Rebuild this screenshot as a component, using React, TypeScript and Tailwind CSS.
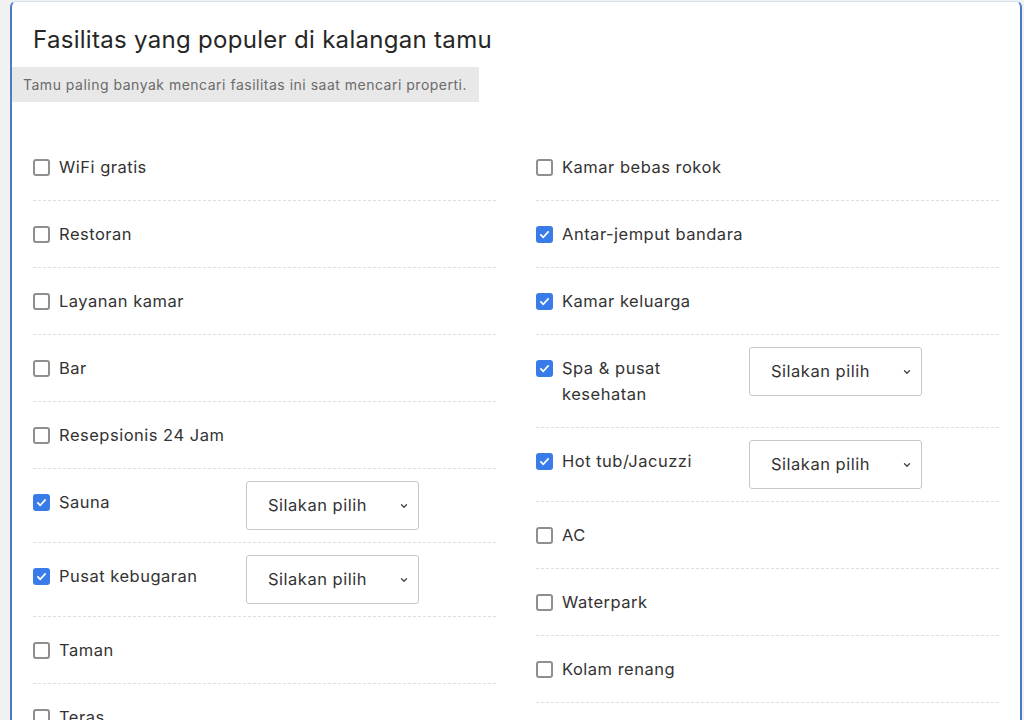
import React from "react";

type Item = { label: string; checked?: boolean; select?: boolean };

const leftItems: Item[] = [
  { label: "WiFi gratis" },
  { label: "Restoran" },
  { label: "Layanan kamar" },
  { label: "Bar" },
  { label: "Resepsionis 24 Jam" },
  { label: "Sauna", checked: true, select: true },
  { label: "Pusat kebugaran", checked: true, select: true },
  { label: "Taman" },
  { label: "Teras" },
];

const rightItems: Item[] = [
  { label: "Kamar bebas rokok" },
  { label: "Antar-jemput bandara", checked: true },
  { label: "Kamar keluarga", checked: true },
  { label: "Spa & pusat kesehatan", checked: true, select: true },
  { label: "Hot tub/Jacuzzi", checked: true, select: true },
  { label: "AC" },
  { label: "Waterpark" },
  { label: "Kolam renang" },
];

function Checkbox({ checked }: { checked?: boolean }) {
  if (checked) {
    return (
      <span className="mt-[5px] flex h-[17px] w-[17px] shrink-0 items-center justify-center rounded-[3px] bg-[#3a7bea]">
        <svg viewBox="0 0 16 16" className="h-[13px] w-[13px]" fill="none">
          <path d="M3.5 8.4l3 3 6-6.6" stroke="white" strokeWidth="2.2" strokeLinecap="round" strokeLinejoin="round" />
        </svg>
      </span>
    );
  }
  return <span className="mt-[5px] h-[17px] w-[17px] shrink-0 rounded-[3px] border-2 border-[#8f8f8f] bg-white" />;
}

function FakeSelect() {
  return (
    <div className="flex h-[49px] w-[173px] shrink-0 items-center justify-between rounded-[3px] border border-[#c8c8c8] bg-white pl-[21px] pr-[9px] text-[16.5px] tracking-[0.5px] text-[#333]">
      <span>Silakan pilih</span>
      <svg viewBox="0 0 12 12" className="h-[10px] w-[10px]" fill="none">
        <path d="M3 4.5l3 3 3-3" stroke="#444" strokeWidth="1.6" strokeLinecap="round" strokeLinejoin="round" />
      </svg>
    </div>
  );
}

function Row({ item }: { item: Item }) {
  return (
    <div className="flex items-start gap-[13px] border-b border-dashed border-[#dedede] py-3">
      <label className={`flex items-start gap-[9px] py-2 ${item.select ? "w-[200px]" : "flex-1"}`}>
        <Checkbox checked={item.checked} />
        <span className="text-[16.5px] leading-[26px] tracking-[0.5px] text-[#333]">{item.label}</span>
      </label>
      {item.select && <FakeSelect />}
    </div>
  );
}

export default function App() {
  return (
    <main
      className="h-[720px] w-[1024px] overflow-hidden bg-[#f1f1f1] pl-[10px] pr-[2px] pt-px"
      style={{ fontFamily: "Inter, 'Liberation Sans', sans-serif" }}
    >
      <div className="min-h-[760px] rounded-t-[6px] border-x-2 border-t border-x-[#4a7ccb] border-t-[#cfe0f5] bg-white pb-8">
        <h1 className="px-[21px] pt-[22px] text-[24px] leading-[32px] tracking-[0.3px] text-[#262626]">
          Fasilitas yang populer di kalangan tamu
        </h1>
        <p className="mt-[11px] w-[467px] bg-[#e8e8e8] px-[11px] py-[7px] text-[14px] leading-[21px] tracking-[0.5px] text-[#6b6b6b]">
          Tamu paling banyak mencari fasilitas ini saat mencari properti.
        </p>
        <div className="mt-[32px] grid grid-cols-2 gap-x-10 px-[21px]">
          <div className="flex flex-col">
            {leftItems.map((it) => (
              <Row key={it.label} item={it} />
            ))}
          </div>
          <div className="flex flex-col">
            {rightItems.map((it) => (
              <Row key={it.label} item={it} />
            ))}
          </div>
        </div>
      </div>
    </main>
  );
}
